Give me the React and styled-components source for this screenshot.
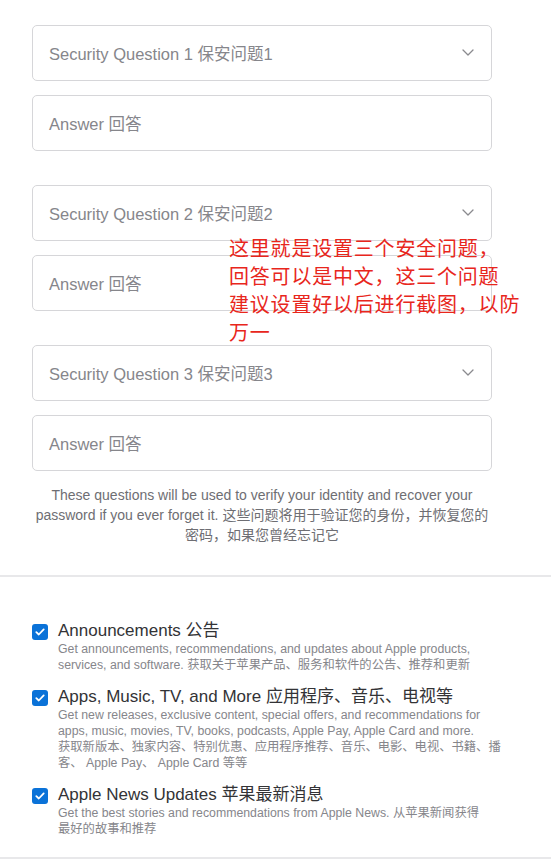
import React from "react";
import styled, { createGlobalStyle } from "styled-components";

const GlobalStyle = createGlobalStyle`
  html, body {
    margin: 0;
    padding: 0;
    background: #fff;
  }
  body {
    font-family: "Liberation Sans", Arial, "Noto Sans CJK SC", sans-serif;
    -webkit-font-smoothing: antialiased;
  }
`;

const questions = [
  { id: 1, label: "Security Question 1 保安问题1" },
  { id: 2, label: "Security Question 2 保安问题2" },
  { id: 3, label: "Security Question 3 保安问题3" },
];

const options = [
  {
    title: "Announcements 公告",
    lines: [
      "Get announcements, recommendations, and updates about Apple products,",
      "services, and software. 获取关于苹果产品、服务和软件的公告、推荐和更新",
    ],
  },
  {
    title: "Apps, Music, TV, and More 应用程序、音乐、电视等",
    lines: [
      "Get new releases, exclusive content, special offers, and recommendations for",
      "apps, music, movies, TV, books, podcasts, Apple Pay, Apple Card and more.",
      "获取新版本、独家内容、特别优惠、应用程序推荐、音乐、电影、电视、书籍、播",
      "客、 Apple Pay、 Apple Card 等等",
    ],
  },
  {
    title: "Apple News Updates 苹果最新消息",
    lines: [
      "Get the best stories and recommendations from Apple News. 从苹果新闻获得",
      "最好的故事和推荐",
    ],
  },
];

const Chevron = () => (
  <svg width="12" height="7" viewBox="0 0 12 7" fill="none">
    <path d="M1 1l5 5 5-5" stroke="#8a8a8e" strokeWidth="1.3" strokeLinecap="round" strokeLinejoin="round" />
  </svg>
);

const Check = () => (
  <svg width="10" height="8" viewBox="0 0 10 8" fill="none">
    <path d="M1.3 4.1l2.5 2.4L8.7 1.4" stroke="#fff" strokeWidth="1.8" strokeLinecap="round" strokeLinejoin="round" />
  </svg>
);

export default function App() {
  return (
    <Page>
      <GlobalStyle />
      <Questions>
        {questions.map((q) => (
          <QuestionGroup key={q.id}>
            <Field>
              <Placeholder>{q.label}</Placeholder>
              <Chevron />
            </Field>
            <Field>
              <Placeholder>Answer 回答</Placeholder>
            </Field>
          </QuestionGroup>
        ))}
        <Helper>
          These questions will be used to verify your identity and recover your
          <br />
          password if you ever forget it. 这些问题将用于验证您的身份，并恢复您的
          <br />
          密码，如果您曾经忘记它
        </Helper>
        <Note>
          这里就是设置三个安全问题，
          <br />
          回答可以是中文，这三个问题
          <br />
          建议设置好以后进行截图，以防
          <br />
          万一
        </Note>
      </Questions>
      <Options>
        {options.map((o) => (
          <Option key={o.title}>
            <Box>
              <Check />
            </Box>
            <OptionText>
              <OptionTitle>{o.title}</OptionTitle>
              <OptionDesc>
                {o.lines.map((l, i) => (
                  <span key={i}>{l}</span>
                ))}
              </OptionDesc>
            </OptionText>
          </Option>
        ))}
      </Options>
    </Page>
  );
}

const Page = styled.div`
  width: 551px;
  min-height: 859px;
  background: #fff;
  overflow: hidden;
`;

const Questions = styled.section`
  position: relative;
  display: flex;
  flex-direction: column;
  gap: 34px;
  padding: 25px 59px 30px 32px;
  border-bottom: 2px solid #e8e8ea;
`;

const QuestionGroup = styled.div`
  display: flex;
  flex-direction: column;
  gap: 14px;
`;

const Field = styled.div`
  box-sizing: border-box;
  height: 56px;
  display: flex;
  align-items: center;
  justify-content: space-between;
  padding: 0 17px 1px 16px;
  border: 1px solid #d6d6d9;
  border-radius: 5px;
  background: #fff;
`;

const Placeholder = styled.span`
  font-size: 16.5px;
  color: #86868b;
`;

const Helper = styled.p`
  margin: -20px -12px 0;
  text-align: center;
  font-size: 14px;
  line-height: 20px;
  color: #6e6e73;
  white-space: nowrap;
`;

const Note = styled.div`
  position: absolute;
  left: 229px;
  top: 234px;
  font-family: "Noto Sans CJK SC", "Microsoft YaHei", sans-serif;
  font-size: 20px;
  line-height: 28px;
  letter-spacing: 0.8px;
  color: #e8261c;
  white-space: nowrap;
`;

const Options = styled.section`
  display: flex;
  flex-direction: column;
  gap: 14px;
  padding: 44px 32px 20px;
  border-bottom: 2px solid #e8e8ea;
`;

const Option = styled.div`
  display: flex;
  align-items: flex-start;
  gap: 10px;
`;

const Box = styled.span`
  flex: none;
  width: 16px;
  height: 16px;
  margin-top: 3px;
  border-radius: 3px;
  background: #0a72d8;
  display: flex;
  align-items: center;
  justify-content: center;
`;

const OptionText = styled.div`
  display: flex;
  flex-direction: column;
`;

const OptionTitle = styled.div`
  font-size: 17px;
  line-height: 20px;
  color: #333336;
`;

const OptionDesc = styled.div`
  display: flex;
  flex-direction: column;
  font-size: 12.3px;
  line-height: 16px;
  color: #86868b;
  white-space: nowrap;
`;
